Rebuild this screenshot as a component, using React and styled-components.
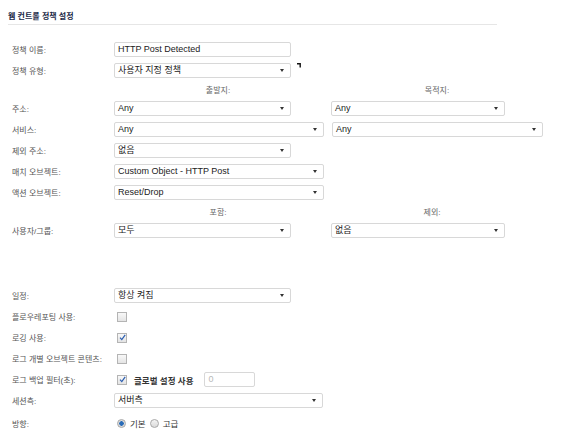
import React from "react";
import styled, { createGlobalStyle } from "styled-components";

const GlobalStyle = createGlobalStyle`
  body {
    margin: 0;
    background: #fff;
    font-family: "Liberation Sans", "Noto Sans CJK KR", sans-serif;
  }
`;

const Page = styled.div`
  width: 489px;
  padding: 11px 0 0 8px;
`;

const Title = styled.h2`
  margin: 0;
  font-size: 8px;
  font-weight: bold;
  line-height: 12px;
  color: #1c2a48;
  padding-bottom: 1px;
  border-bottom: 1px solid #e6e6e6;
`;

const Form = styled.div`
  margin-top: 14px;
  padding-left: 4px;
`;

const Row = styled.div`
  display: flex;
  align-items: center;
  height: ${(p) => p.$h || 21}px;
  & > * {
    flex-shrink: 0;
  }
`;

const Label = styled.div`
  width: 102px;
  font-size: 8px;
  color: #555;
  white-space: nowrap;
`;

const HeaderRow = styled.div`
  display: flex;
  align-items: center;
  height: 17px;
  padding-left: 102px;
`;

const HeaderCell = styled.div`
  flex-shrink: 0;
  width: ${(p) => p.$w}px;
  text-align: center;
  font-size: 8px;
  color: #666;
`;

const Spacer = styled.div`
  height: 44px;
`;

const SelectBox = styled.div`
  position: relative;
  box-sizing: border-box;
  width: ${(p) => p.$w}px;
  height: 15px;
  margin-left: ${(p) => p.$ml || 0}px;
  border: 1px solid #d8d8d8;
  border-radius: 2px;
  background: #fff;
  padding-left: 3px;
  font-size: 9px;
  line-height: 13px;
  color: #222;
  white-space: nowrap;
  overflow: hidden;
`;

const Arrow = styled.span`
  position: absolute;
  right: 6px;
  top: 5px;
  width: 0;
  height: 0;
  border-left: 2.5px solid transparent;
  border-right: 2.5px solid transparent;
  border-top: 3px solid #333;
`;

const TextInput = styled.div`
  box-sizing: border-box;
  width: ${(p) => p.$w}px;
  height: 15px;
  margin-left: ${(p) => p.$ml || 0}px;
  border: 1px solid #d8d8d8;
  border-radius: 2px;
  padding-left: 3px;
  font-size: 9px;
  line-height: 13px;
  color: ${(p) => (p.$muted ? "#b8b8b8" : "#222")};
`;

const Tick = styled.svg`
  align-self: flex-start;
  margin: 3px 0 0 6px;
`;

const Check = styled.span`
  box-sizing: border-box;
  display: inline-flex;
  align-items: center;
  justify-content: center;
  width: 10px;
  height: 10px;
  margin-left: 3px;
  border: 1px solid #b4b4b4;
  background: linear-gradient(#f8f8f8, #e4e4e4);
`;

const Strong = styled.span`
  margin-left: 7px;
  font-size: 8.5px;
  font-weight: bold;
  color: #333;
`;

const Radio = styled.span`
  box-sizing: border-box;
  display: inline-block;
  width: 9px;
  height: 9px;
  margin-left: ${(p) => p.$ml}px;
  border-radius: 50%;
  border: 1px solid #a8a8a8;
  background: ${(p) =>
    p.$on
      ? "radial-gradient(circle, #2a6cb8 0 2px, #dcdcdc 2.5px)"
      : "linear-gradient(#f4f4f4, #dadada)"};
`;

const RadioText = styled.span`
  margin-left: 4px;
  font-size: 8.5px;
  color: #333;
`;

function Select({ w, ml, children }) {
  return (
    <SelectBox $w={w} $ml={ml}>
      {children}
      <Arrow />
    </SelectBox>
  );
}

function Checkbox({ checked }) {
  return (
    <Check>
      {checked && (
        <svg width="7" height="7" viewBox="0 0 7 7">
          <path d="M1 3.6 L2.8 5.6 L6.2 0.8" fill="none" stroke="#2a5db0" strokeWidth="1.2" />
        </svg>
      )}
    </Check>
  );
}

export default function App() {
  return (
    <Page>
      <GlobalStyle />
      <Title>웹 컨트롤 정책 설정</Title>
      <Form>
        <Row>
          <Label>정책 이름:</Label>
          <TextInput $w={177}>HTTP Post Detected</TextInput>
        </Row>
        <Row>
          <Label>정책 유형:</Label>
          <Select w={177}>사용자 지정 정책</Select>
          <Tick width="4" height="5" viewBox="0 0 4 5">
            <path d="M0 0.8 H3.2 V4.6" fill="none" stroke="#111" strokeWidth="1.4" />
          </Tick>
        </Row>
        <HeaderRow>
          <HeaderCell $w={208}>출발지:</HeaderCell>
          <HeaderCell $w={230}>목적지:</HeaderCell>
        </HeaderRow>
        <Row>
          <Label>주소:</Label>
          <Select w={177}>Any</Select>
          <Select w={174} ml={40}>Any</Select>
        </Row>
        <Row>
          <Label>서비스:</Label>
          <Select w={210}>Any</Select>
          <Select w={211} ml={8}>Any</Select>
        </Row>
        <Row>
          <Label>제외 주소:</Label>
          <Select w={177}>없음</Select>
        </Row>
        <Row>
          <Label>매치 오브젝트:</Label>
          <Select w={210}>Custom Object - HTTP Post</Select>
        </Row>
        <Row>
          <Label>액션 오브젝트:</Label>
          <Select w={210}>Reset/Drop</Select>
        </Row>
        <HeaderRow>
          <HeaderCell $w={208}>포함:</HeaderCell>
          <HeaderCell $w={220}>제외:</HeaderCell>
        </HeaderRow>
        <Row>
          <Label>사용자/그룹:</Label>
          <Select w={177}>모두</Select>
          <Select w={174} ml={40}>없음</Select>
        </Row>
        <Spacer />
        <Row>
          <Label>일정:</Label>
          <Select w={177}>항상 켜짐</Select>
        </Row>
        <Row>
          <Label>플로우레포팅 사용:</Label>
          <Checkbox />
        </Row>
        <Row>
          <Label>로깅 사용:</Label>
          <Checkbox checked />
        </Row>
        <Row>
          <Label>로그 개별 오브젝트 콘텐츠:</Label>
          <Checkbox />
        </Row>
        <Row>
          <Label>로그 백업 필터(초):</Label>
          <Checkbox checked />
          <Strong>글로벌 설정 사용</Strong>
          <TextInput $w={51} $ml={11} $muted>0</TextInput>
        </Row>
        <Row>
          <Label>세션측:</Label>
          <Select w={209}>서버측</Select>
        </Row>
        <Row $h={24}>
          <Label>방향:</Label>
          <Radio $on $ml={3} />
          <RadioText>기본</RadioText>
          <Radio $ml={4} />
          <RadioText>고급</RadioText>
        </Row>
      </Form>
    </Page>
  );
}
